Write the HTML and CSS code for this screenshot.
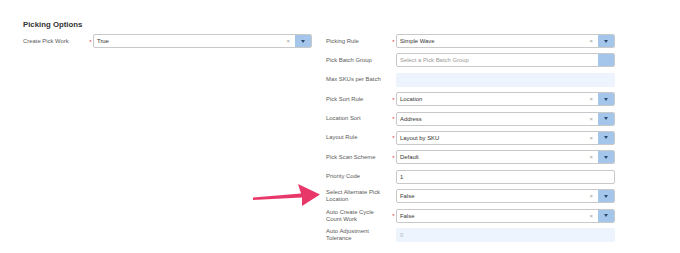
FILE: index.html
```html
<!DOCTYPE html>
<html>
<head>
<meta charset="utf-8">
<link rel="stylesheet" href="styles.css">
</head>
<body>
<div class="page">
  <h2 class="title">Picking Options</h2>
  <div class="cols">
    <div class="col">
      <div class="row">
        <div class="label">Create Pick Work</div>
        <div class="req">*</div>
        <div class="select"><span class="value">True</span><span class="clear">×</span><span class="btn"><span class="caret"></span></span></div>
      </div>
    </div>
    <div class="col">
      <div class="row">
        <div class="label">Picking Rule</div>
        <div class="req">*</div>
        <div class="select"><span class="value">Simple Wave</span><span class="clear">×</span><span class="btn"><span class="caret"></span></span></div>
      </div>
      <div class="row">
        <div class="label">Pick Batch Group</div>
        <div class="req"></div>
        <div class="select"><span class="value placeholder">Select a Pick Batch Group</span><span class="btn"></span></div>
      </div>
      <div class="row">
        <div class="label">Max SKUs per Batch</div>
        <div class="req"></div>
        <div class="input disabled"></div>
      </div>
      <div class="row">
        <div class="label">Pick Sort Rule</div>
        <div class="req">*</div>
        <div class="select"><span class="value">Location</span><span class="clear">×</span><span class="btn"><span class="caret"></span></span></div>
      </div>
      <div class="row">
        <div class="label">Location Sort</div>
        <div class="req">*</div>
        <div class="select"><span class="value">Address</span><span class="clear">×</span><span class="btn"><span class="caret"></span></span></div>
      </div>
      <div class="row">
        <div class="label">Layout Rule</div>
        <div class="req">*</div>
        <div class="select"><span class="value">Layout by SKU</span><span class="clear">×</span><span class="btn"><span class="caret"></span></span></div>
      </div>
      <div class="row">
        <div class="label">Pick Scan Scheme</div>
        <div class="req">*</div>
        <div class="select"><span class="value">Default</span><span class="clear">×</span><span class="btn"><span class="caret"></span></span></div>
      </div>
      <div class="row">
        <div class="label">Priority Code</div>
        <div class="req"></div>
        <div class="input"><span class="value">1</span></div>
      </div>
      <div class="row">
        <div class="label">Select Alternate Pick Location</div>
        <div class="req"></div>
        <div class="select"><span class="value">False</span><span class="clear">×</span><span class="btn"><span class="caret"></span></span></div>
      </div>
      <div class="row">
        <div class="label">Auto Create Cycle Count Work</div>
        <div class="req">*</div>
        <div class="select"><span class="value">False</span><span class="clear">×</span><span class="btn"><span class="caret"></span></span></div>
      </div>
      <div class="row">
        <div class="label">Auto Adjustment Tolerance</div>
        <div class="req"></div>
        <div class="input disabled"><span class="value muted">0</span></div>
      </div>
    </div>
  </div>
</div>
<svg class="arrow" width="680" height="253" viewBox="0 0 680 253">
  <polygon fill="#e8386a" points="253,197.5 301,193.5 298,184 320,194.5 302,206 302,197.5 253,200"/>
</svg>
</body>
</html>
```

FILE: styles.css
```css
html, body {
  margin: 0;
  padding: 0;
  background: #ffffff;
}
body {
  font-family: "Liberation Sans", Arial, sans-serif;
  width: 680px;
  height: 253px;
  overflow: hidden;
  position: relative;
}
.page {
  padding: 20px 0 0 23px;
}
.title {
  margin: 0;
  font-size: 7.8px;
  line-height: 10px;
  font-weight: bold;
  color: #333333;
}
.cols {
  display: flex;
  gap: 14px;
  margin-top: 4px;
}
.col {
  display: flex;
  flex-direction: column;
  gap: 5.4px;
}
.row {
  display: grid;
  grid-template-columns: 65px 5px 219px;
  align-items: center;
  height: 14px;
}
.label {
  font-size: 5.9px;
  line-height: 7px;
  color: #5a5a5a;
  padding-right: 8px;
}
.req {
  color: #e04040;
  font-size: 6px;
  line-height: 6px;
  text-align: center;
  padding-top: 1px;
}
.select, .input {
  box-sizing: border-box;
  height: 14px;
  border: 1px solid #c9c9c9;
  border-radius: 2px;
  background: #ffffff;
  display: flex;
  align-items: center;
  overflow: hidden;
}
.input.disabled {
  background: #eef4fd;
  border-color: #eef4fd;
}
.value {
  flex: 1;
  padding-left: 3px;
  font-size: 5.9px;
  color: #333333;
}
.placeholder {
  color: #999999;
}
.muted {
  color: #aab4c2;
}
.clear {
  font-size: 6px;
  color: #9a9a9a;
  margin-right: 5px;
}
.btn {
  align-self: stretch;
  width: 16px;
  background: #a4c6ea;
  display: flex;
  align-items: center;
  justify-content: center;
}
.caret {
  width: 0;
  height: 0;
  border-left: 2.5px solid transparent;
  border-right: 2.5px solid transparent;
  border-top: 3px solid #2f4b6c;
}
.arrow {
  position: absolute;
  left: 0;
  top: 0;
  pointer-events: none;
}
```
